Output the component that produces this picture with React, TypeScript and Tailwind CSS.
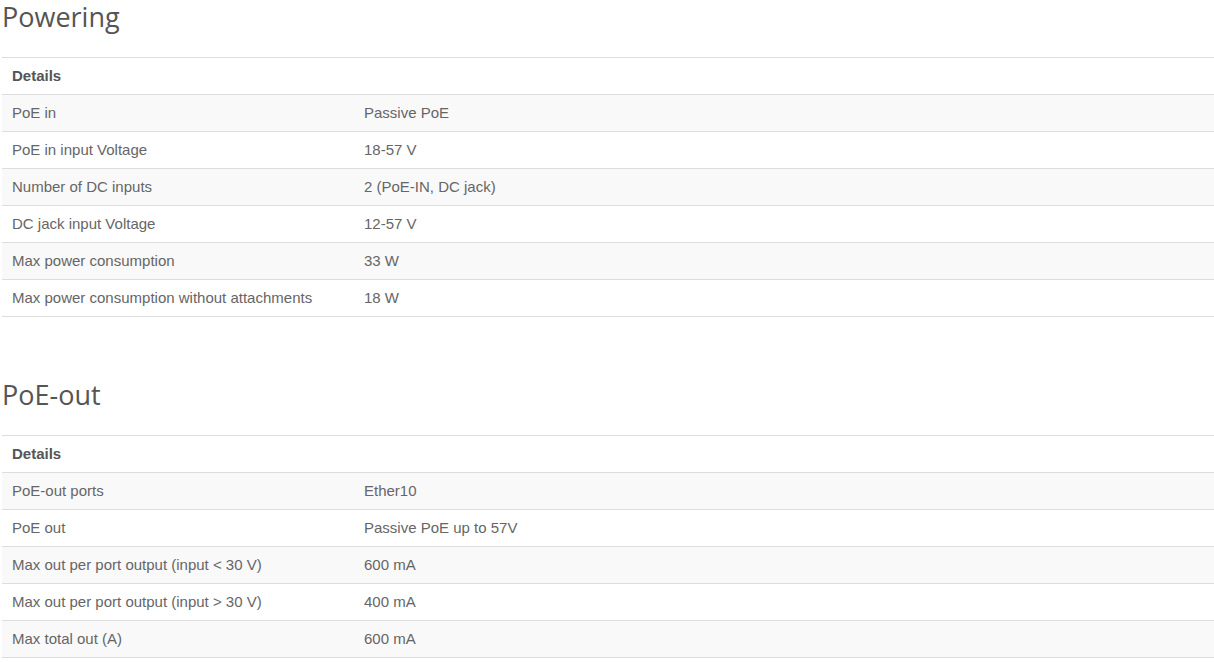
import React from 'react';

type Row = [string, string];

const sections: { title: string; rows: Row[] }[] = [
  {
    title: 'Powering',
    rows: [
      ['PoE in', 'Passive PoE'],
      ['PoE in input Voltage', '18-57 V'],
      ['Number of DC inputs', '2 (PoE-IN, DC jack)'],
      ['DC jack input Voltage', '12-57 V'],
      ['Max power consumption', '33 W'],
      ['Max power consumption without attachments', '18 W'],
    ],
  },
  {
    title: 'PoE-out',
    rows: [
      ['PoE-out ports', 'Ether10'],
      ['PoE out', 'Passive PoE up to 57V'],
      ['Max out per port output (input < 30 V)', '600 mA'],
      ['Max out per port output (input > 30 V)', '400 mA'],
      ['Max total out (A)', '600 mA'],
    ],
  },
];

const SpecTable: React.FC<{ title: string; rows: Row[] }> = ({ title, rows }) => (
  <section>
    <h2 className="h-[57px] pl-[2px] text-[27px] leading-[33px] text-[#555] font-['Open_Sans',sans-serif] font-normal">
      {title}
    </h2>
    <div className="ml-[2px] border-t border-[#ddd] font-['Liberation_Sans',Arial,sans-serif] text-[15px]">
      <div className="flex h-[37px] items-center border-b border-[#ddd] bg-white px-[10px] font-bold text-[#555]">
        Details
      </div>
      {rows.map(([label, value], i) => (
        <div
          key={label}
          className={`flex h-[37px] items-center border-b border-[#ddd] text-[#666] ${
            i % 2 === 0 ? 'bg-[#f9f9f9]' : 'bg-white'
          }`}
        >
          <div className="w-[352px] shrink-0 px-[10px]">{label}</div>
          <div className="px-[10px]">{value}</div>
        </div>
      ))}
    </div>
  </section>
);

export default function App() {
  return (
    <div className="min-h-screen w-[1214px] bg-white">
      <div className="flex flex-col gap-[61px]">
        {sections.map((s) => (
          <SpecTable key={s.title} title={s.title} rows={s.rows} />
        ))}
      </div>
    </div>
  );
}
